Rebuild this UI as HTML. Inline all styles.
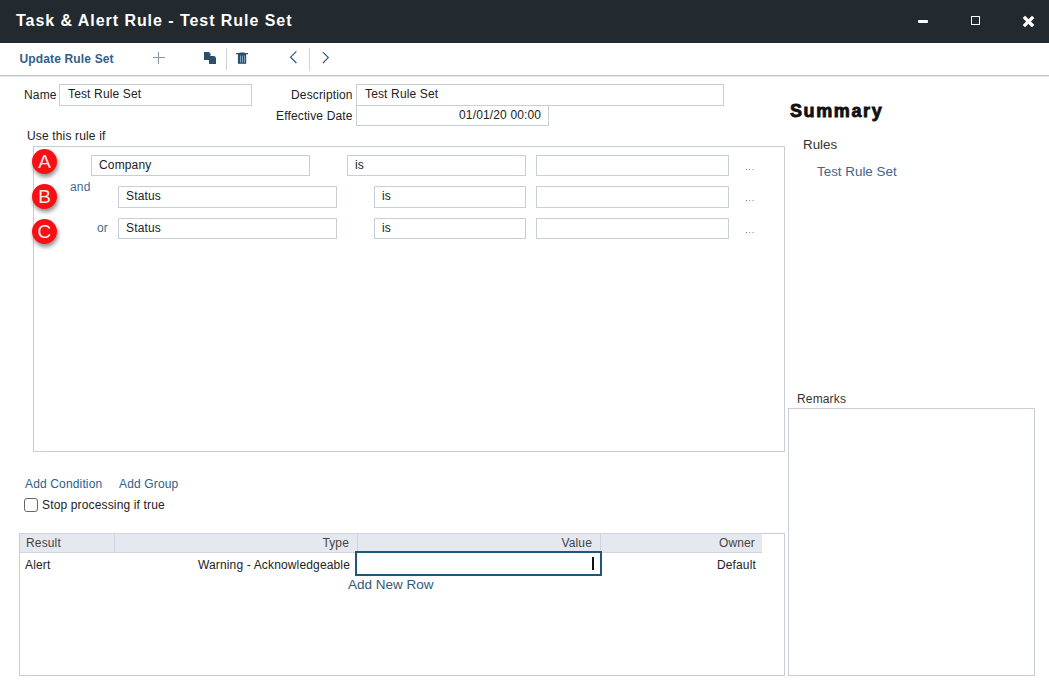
<!DOCTYPE html>
<html><head><meta charset="utf-8">
<style>
*{box-sizing:border-box;margin:0;padding:0}
html,body{width:1049px;height:681px;overflow:hidden;background:#fff}
body{position:relative;font-family:"Liberation Sans",sans-serif;font-size:12px;color:#222}
.a{position:absolute;white-space:nowrap}
.t{position:absolute;white-space:nowrap;line-height:14px;font-size:12px;letter-spacing:0.15px}
.box{position:absolute;border:1px solid #c9cdd8;background:#fff}
.titlebar{position:absolute;left:0;top:0;width:1049px;height:43px;background:#22292f}
.title{left:16px;top:11px;font-size:16px;font-weight:bold;color:#fff;letter-spacing:0.95px;line-height:20px}
.tb{position:absolute;left:0;top:43px;width:1049px;height:34px;border-bottom:1px solid #e4e7ee}
.tb:after{content:"";position:absolute;left:0;top:32px;width:100%;height:1px;background:#bcc3d0}
.upd{left:19.5px;top:52px;font-weight:bold;color:#2f5e89;letter-spacing:0.15px}
.badge{position:absolute;width:25.6px;height:25.6px;border-radius:50%;background:#f80f14;color:#ececec;font-size:19px;text-align:center;line-height:25.6px;box-shadow:1px 3px 4px rgba(0,0,0,.45)}
.dots{position:absolute;left:745.5px;width:1.5px;height:1.2px;background:#6f80a8;box-shadow:3.3px 0 0 #6f80a8,6.6px 0 0 #6f80a8}
.link{color:#30608a}
.hdr{position:absolute;top:533px;height:20px;background:#e6e8f0;border-top:1px solid #d0d4de;border-bottom:1px solid #d0d4de}
</style></head><body>
<div class="titlebar"></div>
<div class="a title">Task &amp; Alert Rule - Test Rule Set</div>

<div class="tb"></div>
<div class="t upd">Update Rule Set</div>
<!-- window controls -->
<div class="a" style="left:918px;top:20px;width:10px;height:3px;background:#fff;border-radius:1px"></div>
<div class="a" style="left:971px;top:16px;width:9px;height:9px;border:1.5px solid #fff"></div>
<svg class="a" style="left:1022px;top:15px" width="13" height="13" viewBox="0 0 13 13"><path d="M3 3 L10 10 M10 3 L3 10" stroke="#fff" stroke-width="3.3" stroke-linecap="square"/></svg>
<!-- toolbar icons -->
<svg class="a" style="left:150px;top:49px" width="18" height="18" viewBox="0 0 18 18"><path d="M3 8.5 H15 M8.5 3 V15" stroke="#8d96a3" stroke-width="1"/></svg>
<svg class="a" style="left:200px;top:49px" width="20" height="18" viewBox="0 0 20 18"><path d="M4 3 H9 L10.5 4.5 V11 H4 Z" fill="#2b4f6c"/><path d="M9 7 H14.5 L16 8.5 V15 H9 Z" fill="#2b4f6c"/><path d="M9 3 V4.5 H10.5" fill="#7d9bb3"/><path d="M14.5 7 V8.5 H16" fill="#7d9bb3"/></svg>
<div class="a" style="left:226px;top:48px;width:1px;height:22px;background:#cdd1d9"></div>
<svg class="a" style="left:234px;top:49px" width="16" height="18" viewBox="0 0 16 18"><rect x="2" y="4" width="12" height="1.2" fill="#2b4f6c"/><rect x="5.5" y="3" width="5" height="1.2" fill="#2b4f6c" opacity="0.5"/><path d="M3.9 4.8 H12.2 V14.8 H3.9 Z" fill="#2b4f6c"/><path d="M6.5 6.5 V13.5 M8.5 6.5 V13.5 M10.5 6.5 V13.5" stroke="#86a0b6" stroke-width="1"/></svg>
<svg class="a" style="left:285px;top:48px" width="16" height="18" viewBox="0 0 16 18"><path d="M11.4 3.4 L5.6 9.2 L11.4 15" fill="none" stroke="#2b5a80" stroke-width="1.2"/></svg>
<div class="a" style="left:309px;top:48px;width:1px;height:23px;background:#cdd1d9"></div>
<svg class="a" style="left:316px;top:48px" width="16" height="18" viewBox="0 0 16 18"><path d="M6.9 4.2 L12.3 9.6 L6.9 15" fill="none" stroke="#2b5a80" stroke-width="1.2"/></svg>


<!-- name row -->
<div class="t" style="left:24px;top:88px">Name</div>
<div class="box" style="left:59px;top:84px;width:193px;height:22px"></div>
<div class="t" style="left:68px;top:87px">Test Rule Set</div>

<div class="t" style="left:291px;top:88px">Description</div>
<div class="t" style="left:276px;top:109px">Effective Date</div>
<div class="box" style="left:356px;top:84px;width:368px;height:22px"></div>
<div class="box" style="left:356px;top:105px;width:193px;height:21px"></div>
<div class="t" style="left:365px;top:87px">Test Rule Set</div>
<div class="t" style="left:459px;top:108px">01/01/20 00:00</div>

<div class="t" style="left:27px;top:129px">Use this rule if</div>
<div class="box" style="left:33px;top:146px;width:752px;height:306px"></div>

<!-- conditions -->
<div class="box" style="left:91px;top:155px;width:219px;height:21px"></div>
<div class="t" style="left:99px;top:158px">Company</div>
<div class="box" style="left:347px;top:155px;width:179px;height:21px"></div>
<div class="t" style="left:355px;top:158px">is</div>
<div class="box" style="left:536px;top:155px;width:193px;height:21px"></div>
<div class="dots" style="top:169px"></div>

<div class="t" style="left:70px;top:180px;color:#456a8c">and</div>
<div class="box" style="left:118px;top:186px;width:219px;height:22px"></div>
<div class="t" style="left:126px;top:189px">Status</div>
<div class="box" style="left:374px;top:186px;width:152px;height:22px"></div>
<div class="t" style="left:382px;top:189px">is</div>
<div class="box" style="left:536px;top:186px;width:193px;height:22px"></div>
<div class="dots" style="top:200px"></div>

<div class="t" style="left:97px;top:221px;color:#456a8c">or</div>
<div class="box" style="left:118px;top:218px;width:219px;height:21px"></div>
<div class="t" style="left:126px;top:221px">Status</div>
<div class="box" style="left:374px;top:218px;width:152px;height:21px"></div>
<div class="t" style="left:382px;top:221px">is</div>
<div class="box" style="left:536px;top:218px;width:193px;height:21px"></div>
<div class="dots" style="top:232px"></div>

<div class="badge" style="left:31.7px;top:148.5px">A</div>
<div class="badge" style="left:31.7px;top:183.7px">B</div>
<div class="badge" style="left:31.7px;top:218.8px">C</div>

<div class="t link" style="left:25px;top:477px">Add Condition</div>
<div class="t link" style="left:119px;top:477px">Add Group</div>
<div class="a" style="left:24px;top:498px;width:14px;height:14px;border:1px solid #666;border-radius:3px"></div>
<div class="t" style="left:42px;top:498px">Stop processing if true</div>

<!-- table -->
<div class="box" style="left:19px;top:533px;width:766px;height:143px"></div>
<div class="hdr" style="left:20px;width:742px"></div>
<div class="a" style="left:114px;top:534px;width:1px;height:18px;background:#d0d4de"></div>
<div class="a" style="left:357px;top:534px;width:1px;height:18px;background:#d0d4de"></div>
<div class="a" style="left:600px;top:534px;width:1px;height:18px;background:#d0d4de"></div>
<div class="t" style="left:26px;top:536px;color:#444">Result</div>
<div class="t" style="left:300px;top:536px;color:#444;width:49px;text-align:right">Type</div>
<div class="t" style="left:540px;top:536px;color:#444;width:52px;text-align:right">Value</div>
<div class="t" style="left:700px;top:536px;color:#444;width:55px;text-align:right">Owner</div>
<div class="t" style="left:25px;top:558px">Alert</div>
<div class="t" style="left:150px;top:558px;width:200px;text-align:right">Warning - Acknowledgeable</div>
<div class="a" style="left:355px;top:551px;width:247px;height:25px;border:2px solid #1f5877"></div>
<div class="a" style="left:592px;top:557px;width:2px;height:13px;background:#111"></div>
<div class="t" style="left:650px;top:558px;width:106px;text-align:right">Default</div>
<div class="a" style="left:348px;top:577px;font-size:13.5px;line-height:16px;color:#2f5a80">Add New Row</div>

<!-- summary -->
<div class="a" style="left:790px;top:101px;font-size:18px;font-weight:bold;letter-spacing:1.6px;color:#111;line-height:20px;-webkit-text-stroke:0.85px #111">Summary</div>
<div class="a" style="left:803px;top:137px;font-size:13.4px;line-height:16px;color:#333">Rules</div>
<div class="a" style="left:817px;top:164px;font-size:13.4px;line-height:16px;color:#3f6589">Test Rule Set</div>
<div class="t" style="left:797px;top:392px;color:#333">Remarks</div>
<div class="box" style="left:788px;top:408px;width:247px;height:268px"></div>
</body></html>
